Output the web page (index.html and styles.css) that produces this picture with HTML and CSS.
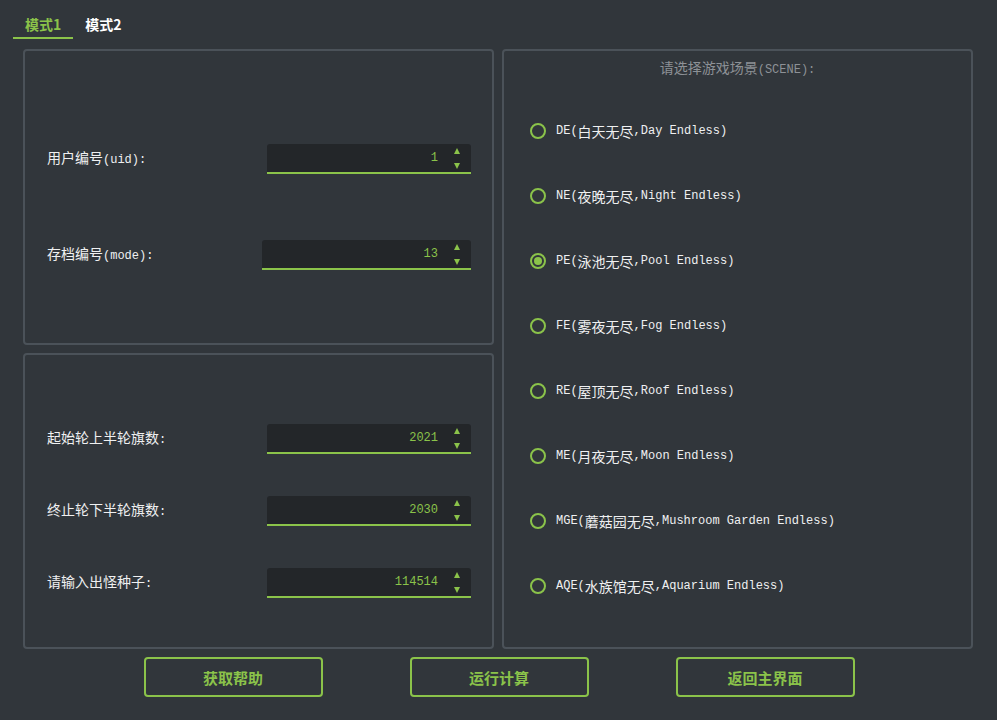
FILE: index.html
```html
<!DOCTYPE html>
<html>
<head>
<meta charset="utf-8">
<link rel="stylesheet" href="styles.css">
</head>
<body>
<div class="tabs">
  <div class="tab active">模式1</div>
  <div class="tab">模式2</div>
</div>
<div class="main">
  <div class="left">
    <div class="panel top">
      <div class="row"><span class="label"><span class="zh">用户编号</span>(uid):</span><div class="spin"><span class="val">1</span><span class="arrows"><i class="up"></i><i class="down"></i></span></div></div>
      <div class="row"><span class="label"><span class="zh">存档编号</span>(mode):</span><div class="spin wide"><span class="val">13</span><span class="arrows"><i class="up"></i><i class="down"></i></span></div></div>
    </div>
    <div class="panel bottom">
      <div class="row"><span class="label"><span class="zh">起始轮上半轮旗数</span>:</span><div class="spin"><span class="val">2021</span><span class="arrows"><i class="up"></i><i class="down"></i></span></div></div>
      <div class="row"><span class="label"><span class="zh">终止轮下半轮旗数</span>:</span><div class="spin"><span class="val">2030</span><span class="arrows"><i class="up"></i><i class="down"></i></span></div></div>
      <div class="row"><span class="label"><span class="zh">请输入出怪种子</span>:</span><div class="spin"><span class="val">114514</span><span class="arrows"><i class="up"></i><i class="down"></i></span></div></div>
    </div>
  </div>
  <div class="panel right">
    <div class="title"><span class="zh">请选择游戏场景</span>(SCENE):</div>
    <div class="radios">
      <div class="radio"><span class="dot"></span>DE(<span class="zh">白天无尽</span>,Day Endless)</div>
      <div class="radio"><span class="dot"></span>NE(<span class="zh">夜晚无尽</span>,Night Endless)</div>
      <div class="radio checked"><span class="dot"></span>PE(<span class="zh">泳池无尽</span>,Pool Endless)</div>
      <div class="radio"><span class="dot"></span>FE(<span class="zh">雾夜无尽</span>,Fog Endless)</div>
      <div class="radio"><span class="dot"></span>RE(<span class="zh">屋顶无尽</span>,Roof Endless)</div>
      <div class="radio"><span class="dot"></span>ME(<span class="zh">月夜无尽</span>,Moon Endless)</div>
      <div class="radio"><span class="dot"></span>MGE(<span class="zh">蘑菇园无尽</span>,Mushroom Garden Endless)</div>
      <div class="radio"><span class="dot"></span>AQE(<span class="zh">水族馆无尽</span>,Aquarium Endless)</div>
    </div>
  </div>
</div>
<div class="buttons">
  <div class="btn">获取帮助</div>
  <div class="btn">运行计算</div>
  <div class="btn">返回主界面</div>
</div>
</body>
</html>
```
FILE: styles.css
```css
* { box-sizing: border-box; }
html, body { margin: 0; padding: 0; }
body {
  width: 997px;
  height: 720px;
  background: #31363b;
  color: #eff0f1;
  font-family: "Liberation Mono", "Noto Sans CJK SC", monospace;
  font-size: 12px;
  overflow: hidden;
}
.zh {
  font-family: "Noto Sans CJK SC", sans-serif;
  font-size: 14px;
  line-height: 16px;
}
.tabs {
  display: flex;
  padding: 12px 0 0 13px;
  height: 39px;
}
.tab {
  font-family: "Noto Sans CJK SC", sans-serif;
  font-weight: bold;
  font-size: 14px;
  line-height: 25px;
  height: 27px;
  padding: 0 12px;
  color: #ffffff;
  border-bottom: 2px solid transparent;
}
.tab.active {
  color: #8bc34a;
  border-bottom-color: #8bc34a;
}
.main {
  display: flex;
  gap: 8px;
  margin-top: 10px;
  padding: 0 24px 0 23px;
}
.left {
  display: flex;
  flex-direction: column;
  gap: 8px;
  width: 471px;
}
.panel {
  border: 2px solid #4b5259;
  border-radius: 4px;
  height: 296px;
}
.panel.top, .panel.bottom {
  display: flex;
  flex-direction: column;
  padding: 0 21px;
}
.panel.top { padding-top: 93px; gap: 66px; }
.panel.bottom { padding-top: 69px; gap: 42px; }
.row {
  display: flex;
  align-items: center;
  justify-content: space-between;
  height: 30px;
}
.label {
  font-size: 12px;
  line-height: 16px;
  padding-left: 1px;
  margin-top: -2px;
}
.spin {
  width: 204px;
  height: 30px;
  background: #232629;
  border-radius: 3px 3px 0 0;
  border-bottom: 2px solid #8bc34a;
  display: flex;
  align-items: center;
  justify-content: flex-end;
  color: #8bc34a;
  font-size: 12px;
}
.spin.wide { width: 209px; }
.val { padding-right: 9px; }
.arrows {
  width: 20px;
  height: 28px;
  display: flex;
  flex-direction: column;
  justify-content: space-between;
  align-items: center;
  padding: 4px 0 3px;
  margin-right: 4px;
}
.arrows i {
  display: block;
  width: 0;
  height: 0;
  border-left: 3.5px solid transparent;
  border-right: 3.5px solid transparent;
}
.arrows .up { border-bottom: 6px solid #8bc34a; }
.arrows .down { border-top: 6px solid #8bc34a; }
.panel.right {
  width: 471px;
  height: 600px;
  display: flex;
  flex-direction: column;
}
.title {
  text-align: center;
  color: #8d9196;
  font-size: 12px;
  margin-top: 8px;
  line-height: 18px;
}
.title .zh { color: #8d9196; }
.radios {
  display: flex;
  flex-direction: column;
  gap: 45px;
  padding: 42px 0 0 26px;
}
.radio {
  display: flex;
  align-items: center;
  height: 20px;
  font-size: 12px;
}
.dot {
  width: 16px;
  height: 16px;
  border: 2px solid #8bc34a;
  border-radius: 50%;
  margin-right: 10px;
  display: flex;
  align-items: center;
  justify-content: center;
}
.radio.checked .dot::after {
  content: "";
  width: 8px;
  height: 8px;
  border-radius: 50%;
  background: #8bc34a;
}
.buttons {
  display: flex;
  justify-content: center;
  gap: 87px;
  margin-top: 8px;
  padding-left: 1px;
}
.btn {
  width: 179px;
  height: 40px;
  border: 2px solid #8bc34a;
  border-radius: 4px;
  color: #8bc34a;
  font-family: "Noto Sans CJK SC", sans-serif;
  font-weight: bold;
  font-size: 15px;
  display: flex;
  align-items: center;
  justify-content: center;
}
```
